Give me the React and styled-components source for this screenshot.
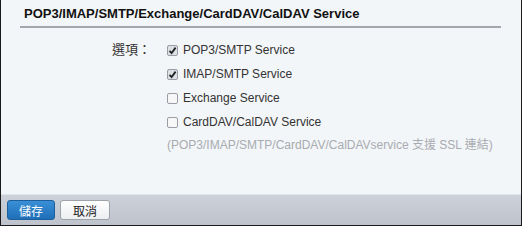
import styled, { createGlobalStyle } from "styled-components";

const GlobalStyle = createGlobalStyle`
  html, body {
    margin: 0;
    padding: 0;
  }
  body {
    font-family: "Liberation Sans", Arial, "Noto Sans CJK TC", sans-serif;
    background: #ffffff;
  }
`;

const options = [
  { label: "POP3/SMTP Service", checked: true },
  { label: "IMAP/SMTP Service", checked: true },
  { label: "Exchange Service", checked: false },
  { label: "CardDAV/CalDAV Service", checked: false },
];

function App() {
  return (
    <>
      <GlobalStyle />
      <Frame>
        <Body>
          <Title>POP3/IMAP/SMTP/Exchange/CardDAV/CalDAV Service</Title>
          <Form>
            <Label>選項：</Label>
            <OptionList>
              {options.map((o) => (
                <OptionRow key={o.label}>
                  <Box $checked={o.checked}>
                    {o.checked && (
                      <svg width="9" height="9" viewBox="0 0 9 9">
                        <path
                          d="M1.5 4.8 L3.6 7 L7.6 1.6"
                          fill="none"
                          stroke="#222"
                          strokeWidth="1.8"
                        />
                      </svg>
                    )}
                  </Box>
                  <OptionText>{o.label}</OptionText>
                </OptionRow>
              ))}
              <Hint>(POP3/IMAP/SMTP/CardDAV/CalDAVservice 支援 SSL 連結)</Hint>
            </OptionList>
          </Form>
        </Body>
        <Footer>
          <Button $primary>儲存</Button>
          <Button>取消</Button>
        </Footer>
      </Frame>
    </>
  );
}

const Frame = styled.div`
  width: 522px;
  height: 226px;
  box-sizing: border-box;
  border: 1px solid #1a1a1a;
  border-top: none;
  background: #f3f6f9;
  display: flex;
  flex-direction: column;
`;

const Body = styled.div`
  flex: 1;
  padding: 0 20px 0 19px;
`;

const Title = styled.div`
  font-size: 13px;
  font-weight: bold;
  color: #111;
  line-height: 15px;
  padding: 6px 0 5px 4px;
  border-bottom: 2px solid #a3a7ad;
`;

const Form = styled.div`
  display: flex;
  padding-top: 10px;
`;

const Label = styled.div`
  width: 147px;
  text-align: right;
  font-size: 13px;
  color: #333;
  line-height: 24px;
  padding-right: 16px;
  box-sizing: border-box;
`;

const OptionList = styled.div`
  display: flex;
  flex-direction: column;
`;

const OptionRow = styled.div`
  display: flex;
  align-items: center;
  height: 24px;
`;

const Box = styled.span`
  width: 11px;
  height: 11px;
  box-sizing: border-box;
  border: 1px solid #9a9ea4;
  border-radius: 2px;
  background: ${(p) => (p.$checked ? "#dcdfe3" : "#f7f7f7")};
  display: flex;
  align-items: center;
  justify-content: center;
  margin-right: 5px;
`;

const OptionText = styled.span`
  font-size: 12px;
  color: #333;
`;

const Hint = styled.div`
  font-size: 12px;
  line-height: 14px;
  color: #a8abb0;
  margin-top: 4px;
`;

const Footer = styled.div`
  height: 31px;
  box-sizing: border-box;
  border-top: 1px solid #e2e5ea;
  background: linear-gradient(#cdd1d9, #bdc2cc);
  display: flex;
  align-items: center;
  gap: 5px;
  padding-left: 6px;
`;

const Button = styled.button`
  width: ${(p) => (p.$primary ? "48px" : "50px")};
  height: 20px;
  padding: 0;
  font-family: "Liberation Sans", "Noto Sans CJK TC", sans-serif;
  font-size: 12px;
  border-radius: 3px;
  border: 1px solid ${(p) => (p.$primary ? "#1d5f9c" : "#9ea3aa")};
  color: ${(p) => (p.$primary ? "#fff" : "#222")};
  background: ${(p) =>
    p.$primary
      ? "linear-gradient(#3a8fd6, #1f6fb8)"
      : "linear-gradient(#ffffff, #eceef1)"};
`;

export default App;
